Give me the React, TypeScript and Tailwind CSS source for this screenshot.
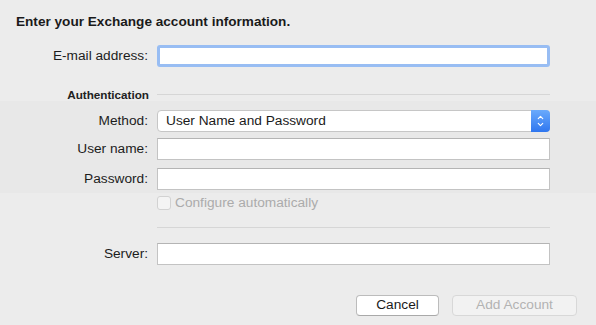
import { ChevronUp, ChevronDown } from "lucide-react";

function Label({ text }: { text: string }) {
    return <div className="w-[149px] shrink-0 pr-[1px] text-right text-[13.7px] leading-[16px] text-[#1c1c1c]">{text}</div>;
}

function Field() {
    return <div className="h-[22px] w-[393px] border border-[#c3c3c3] border-t-[#b4b4b4] bg-white" />;
}

export default function App() {
    return (
        <div className="flex h-[325px] w-[596px] flex-col bg-[#ececec] font-['Liberation_Sans',Arial,sans-serif]">
            <div className="mt-[14px] pl-[16px] text-[13.6px] font-bold leading-[16px] text-[#1a1a1a]">
                Enter your Exchange account information.
            </div>

            <div className="mt-[15px] flex items-center gap-2">
                <Label text="E-mail address:" />
                <div className="h-[22px] w-[393px] rounded-[3px] border-[3px] border-[#98bdf3] bg-white" />
            </div>

            <div className="mt-[21px] flex h-[13px] items-center gap-2">
                <div className="w-[149px] shrink-0 text-right text-[11.7px] font-bold leading-[13px] text-[#222]">Authentication</div>
                <div className="h-px w-[393px] bg-[#d6d6d6]" />
            </div>

            <div className="flex flex-col bg-[#e8e8e8] pb-[3px] pt-[9px]">
                <div className="flex items-center gap-2">
                    <Label text="Method:" />
                    <div className="flex h-[22px] w-[393px] items-center rounded-[4px] border border-[#c6c6c6] bg-white">
                        <span className="flex-1 pl-[8px] text-[13.7px] leading-[16px] text-[#1a1a1a]">User Name and Password</span>
                        <div className="-mr-px flex h-[22px] w-[19px] flex-col items-center justify-center rounded-r-[4px] bg-gradient-to-b from-[#6aaafc] to-[#2f76ef] text-white">
                            <ChevronUp size={9} strokeWidth={3} className="-mb-[1px]" />
                            <ChevronDown size={9} strokeWidth={3} className="-mt-[1px]" />
                        </div>
                    </div>
                </div>
                <div className="mt-[6px] flex items-center gap-2">
                    <Label text="User name:" />
                    <Field />
                </div>
                <div className="mt-[8px] flex items-center gap-2">
                    <Label text="Password:" />
                    <Field />
                </div>
            </div>

            <div className="mt-[3px] flex h-[14px] items-center gap-2 pl-[157px]">
                <div className="h-[14px] w-[14px] rounded-[3px] border border-[#d2d2d2] bg-[#f4f4f4]" />
                <span className="-ml-[4px] text-[13.7px] leading-[16px] text-[#ababab]">Configure automatically</span>
            </div>

            <div className="ml-[157px] mt-[17px] h-px w-[393px] bg-[#d6d6d6]" />

            <div className="mt-[15px] flex items-center gap-2">
                <Label text="Server:" />
                <Field />
            </div>

            <div className="mt-[30px] flex justify-end gap-[13px] pr-[19px]">
                <div className="flex h-[21px] w-[83px] items-center justify-center rounded-[4px] border border-[#bcbcbc] border-b-[#a9a9a9] bg-white text-[13.7px] text-[#1a1a1a]">
                    Cancel
                </div>
                <div className="flex h-[21px] w-[125px] items-center justify-center rounded-[4px] border border-[#d8d8d8] bg-[#f2f2f2] text-[13.7px] text-[#b3b3b3]">
                    Add Account
                </div>
            </div>
        </div>
    );
}
